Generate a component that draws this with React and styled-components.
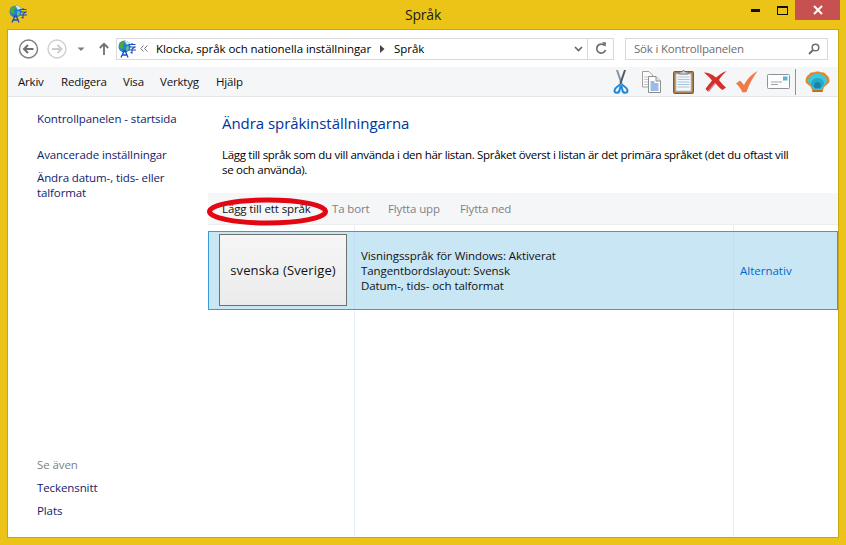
import React from "react";
import styled, { createGlobalStyle } from "styled-components";

const Global = createGlobalStyle`
  html, body { margin: 0; padding: 0; background: #ecc417; }
  body { font-family: "Open Sans", "Noto Sans", "Liberation Sans", sans-serif; font-size: 11.5px; color: #000; }
  * { box-sizing: border-box; }
`;

const Frame = styled.div`
  width: 846px; height: 545px; background: #ecc417; display: flex; flex-direction: column; overflow: hidden;
`;
const TitleBar = styled.div`
  height: 29px; flex: none; position: relative; display: flex; align-items: flex-start; justify-content: center;
`;
const TitleIcon = styled.div`
  position: absolute; left: 9px; top: 5px; width: 18px; height: 18px;
`;
const Title = styled.div`
  font-size: 14px; line-height: 29px; color: #1a1a1a; letter-spacing: -0.2px;
`;
const WindowButtons = styled.div`
  position: absolute; right: 6px; top: 0; display: flex; align-items: flex-start;
`;
const WinBtn = styled.div`
  width: ${p => p.$w}px; height: 20px; display: flex; align-items: center; justify-content: center;
  background: ${p => p.$close ? "#c75050" : "transparent"};
`;
const Client = styled.div`
  flex: 1; margin: 0 7px 7px 7px; border: 1px solid #c9a516; background: #fff; display: flex; flex-direction: column; min-height: 0;
`;
const NavBar = styled.div`
  height: 37px; flex: none; display: flex; align-items: center; padding: 0 10px 0 10px; background: #fff;
`;
const NavIcons = styled.div`
  width: 98px; flex: none; height: 24px;
`;
const BoxBase = styled.div`
  height: 22px; border: 1px solid #d9d9d9; background: #fff; display: flex; align-items: center;
`;
const Address = styled(BoxBase)`
  width: 498px; flex: none; padding-left: 1px;
`;
const Crumbs = styled.div`
  flex: 1; display: flex; align-items: center; min-width: 0; white-space: nowrap; letter-spacing: -0.07px;
`;
const CrumbChevrons = styled.span`
  display: inline-flex; width: 16px; margin-left: 4px;
`;
const Sep = styled.span`
  display: inline-flex; width: 23px; justify-content: center;
`;
const Drop = styled.div`
  width: 25px; height: 20px; display: flex; align-items: center; justify-content: center; border-right: 1px solid #d9d9d9;
  padding-left: 6px;
`;
const Refresh = styled.div`
  width: 25px; height: 20px; display: flex; align-items: center; justify-content: center;
`;
const Search = styled(BoxBase)`
  width: 203px; flex: none; margin-left: 11px; padding: 0 7px 0 8px; justify-content: space-between; color: #6d6d6d; letter-spacing: -0.2px;
`;
const MenuBar = styled.div`
  height: 30px; flex: none; background: #f5f6f7; border-bottom: 1px solid #e6e6e6; display: flex; align-items: center; padding-left: 10px; position: relative;
`;
const MenuItem = styled.div`
  width: ${p => p.$w}px; letter-spacing: -0.2px; color: #111;
`;
const Tools = styled.div`
  position: absolute; left: 597px; top: 0; height: 29px; display: flex; align-items: center;
`;
const Tool = styled.div`
  width: ${p => p.$w}px; display: flex; justify-content: center; align-items: center;
`;
const ToolSep = styled.div`
  width: 1px; height: 26px; background: #8f9499; margin: 0 9px 0 1px;
`;
const Body = styled.div`
  flex: 1; display: flex; min-height: 0;
`;
const Sidebar = styled.nav`
  width: 200px; flex: none; padding: 14px 0 0 29px; display: flex; flex-direction: column; letter-spacing: -0.1px;
`;
const SideLink = styled.div`
  color: #12226e; line-height: 15px; margin-bottom: ${p => p.$mb || 0}px;
`;
const SideBottom = styled.div`
  margin-top: auto; padding-bottom: 19px; display: flex; flex-direction: column; gap: 8px;
`;
const SideMuted = styled.div`
  color: #7f7f7f; line-height: 15px;
`;
const Content = styled.main`
  flex: 1; min-width: 0; display: flex; flex-direction: column; position: relative;
`;
const Intro = styled.div`
  padding: 16px 0 0 14px; height: 96px; flex: none;
`;
const Heading = styled.h1`
  margin: 0 0 14px; font-weight: 400; font-size: 15px; line-height: 20px; color: #003399; letter-spacing: -0.05px;
`;
const Lead = styled.p`
  margin: 0; line-height: 15px; letter-spacing: -0.3px; white-space: nowrap;
`;
const ActionBar = styled.div`
  height: 32px; flex: none; background: #f5f6f7; border-bottom: 1px solid #eceded; display: flex; align-items: center; padding: 0 0 0 14px;
`;
const Action = styled.div`
  color: ${p => p.$on ? "#111" : "#7f7f88"}; width: ${p => p.$w}px; letter-spacing: ${p => p.$on ? "-0.12px" : "-0.15px"}; white-space: nowrap;
`;
const Oval = styled.svg`
  position: absolute; left: -1px; top: 99px; width: 124px; height: 32px; overflow: visible;
`;
const Gap = styled.div`
  height: 6px; flex: none; display: grid; grid-template-columns: 147px 379px 1fr;
`;
const Row = styled.div`
  height: 79px; flex: none; display: grid; grid-template-columns: 146px 379px 1fr; background: #c9e6f5; border: 1px solid #3a9bd9;
`;
const Cell = styled.div`
  border-right: ${p => p.$last ? "none" : "1px solid #bfdef2"}; display: flex; align-items: center;
`;
const LangBtn = styled.div`
  width: 128px; height: 72px; margin: -1px 0 0 10px; border: 1px solid #707070; background: linear-gradient(#f6f6f6, #ebebeb);
  display: flex; align-items: center; justify-content: center; font-size: 13px; letter-spacing: 0.15px; color: #111;
`;
const Info = styled.div`
  padding-left: 6px; line-height: 15px; letter-spacing: -0.08px; color: #111; white-space: nowrap;
`;
const Link = styled.div`
  padding-left: 6px; color: #0066cc; letter-spacing: 0;
`;
const Filler = styled.div`
  flex: 1; display: grid; grid-template-columns: 147px 379px 1fr;
`;
const Col = styled.div`
  border-right: ${p => p.$last ? "none" : "1px solid #e6eefa"};
`;

const LangIcon = ({ size = 18 }) => (
  <svg width={size} height={size} viewBox="0 0 18 18">
    <circle cx="6.500" cy="6.500" r="6" fill="#1f7fdc" />
    <path d="M6 .8 C9 .5 11.500 2 12 4.500 L8.500 4.500 L7.500 2.500Z" fill="#cfeefc" />
    <path d="M1.500 3.500 C3 1.500 5 .8 6.500 1 L7 3.500 L5 4.500 L5.500 7.500 L4 9.500 L1 7Z" fill="#4fa83a" />
    <path d="M8 6.500 L11 6.500 L10.500 10 L8.500 11Z" fill="#7cc55c" />
    <path d="M10.500 4.500h7M14 3v1.500M11.500 7h5.500L14 9v4l-1.500-.5M10.500 10h7.500" stroke="#1c4bc8" strokeWidth="1.100" fill="none" />
    <path d="M3 17.500 L6 11 L7.300 11 L10 17.500 M4.300 15 H8.800" stroke="#1c4bc8" strokeWidth="1.300" fill="none" />
  </svg>
);

const NavSvg = () => (
  <svg width="98" height="24" viewBox="0 0 98 24">
    <circle cx="10.500" cy="12" r="9" fill="#fff" stroke="#7d7d7d" strokeWidth="1.400" />
    <path d="M15.500 12H6.500M10 8l-4 4 4 4" fill="none" stroke="#6f6f6f" strokeWidth="2" />
    <circle cx="39" cy="12" r="9" fill="#fff" stroke="#cfcfcf" strokeWidth="1.400" />
    <path d="M34 12h9M39.500 8l4 4-4 4" fill="none" stroke="#cdcdcd" strokeWidth="2" />
    <path d="M59.500 10.500h7l-3.500 3.500z" fill="#7c7c7c" />
    <path d="M86 18V7M81.800 11L86 6.800 90.200 11" fill="none" stroke="#707070" strokeWidth="1.800" />
  </svg>
);

const Scissors = () => (
  <svg width="16" height="24" viewBox="0 0 16 24">
    <path d="M3 0 L5 0 L9.500 13 L8 15 Z" fill="#8793a0" />
    <path d="M13 0 L11 0 L6.500 13 L8 15 Z" fill="#4f5a66" />
    <path d="M7 14 C6 16.500 1.500 17 1.500 20.500 C1.500 23.500 6 23.500 6.500 20.500 C6.800 18.500 7 17 8 15.500" fill="none" stroke="#1f87d8" strokeWidth="2" />
    <path d="M9 14 C10 16.500 14.500 17 14.500 20.500 C14.500 23.500 10 23.500 9.500 20.500 C9.200 18.500 9 17 8 15.500" fill="none" stroke="#1f87d8" strokeWidth="2" />
  </svg>
);
const CopyIcon = () => (
  <svg width="19" height="22" viewBox="0 0 19 22">
    <path d="M.5.5h6.500l3.500 3.500v12h-10z" fill="#fbfbfb" stroke="#a0a0a0" />
    <path d="M2 6h6M2 8.500h4M2 11h4M2 13.500h4" stroke="#c8c8c8" />
    <path d="M6.500 5.500h7.500l4.500 4.500v11.500h-12z" fill="#fff" stroke="#8d8d8d" />
    <path d="M14 5.500v4.500h4.500" fill="#e6e6e6" stroke="#8d8d8d" />
    <path d="M8.500 11h4M8.500 13h8M8.500 15h8M8.500 17h8M8.500 19h8" stroke="#3b79c9" />
  </svg>
);
const ClipIcon = () => (
  <svg width="21" height="25" viewBox="0 0 21 25">
    <rect x=".5" y="2.500" width="20" height="22" rx="1" fill="#a57d50" stroke="#7e5a33" />
    <rect x="3" y="5" width="15" height="17" fill="#f5f8fb" stroke="#c9c9c9" />
    <path d="M4.500 8h12M4.500 10.500h12M4.500 13h12M4.500 15.500h12M4.500 18h12" stroke="#a9c4de" />
    <path d="M6 5V3h3l1.500-2 1.500 2h3v2z" fill="#d9d9d9" stroke="#666" strokeWidth=".8" />
  </svg>
);
const XIcon = () => (
  <svg width="23" height="21" viewBox="0 0 23 21">
    <path d="M0 1.500 C4 1.500 8 3 12 6.500 C15 4 18 1.500 22.500 0 C19.500 3 17 5.500 15 9 C17.500 12 19.500 14.500 22 16.500 L18.500 19 C15.500 17 13.500 14.500 11 12 C8.500 14.500 6 17.500 4 20.500 L1.500 18 C3.500 15 6 12 8 9.500 C5.500 6.500 3 4 0 1.500Z" fill="#d42f2a" />
    <path d="M4 20.500 C6 17.500 8.500 14.500 11 12 L11.800 12.800 C9.500 15.500 7 18 5 20.800Z" fill="#b98a86" />
  </svg>
);
const CheckIcon = () => (
  <svg width="22" height="22" viewBox="0 0 22 22">
    <path d="M0 12.500 L4 9.500 L8 14 C11 8.500 15 3.500 21.500 0 C17.500 6 13 13 10.500 21 L6.500 21.500 C5 18 2.500 14.500 0 12.500Z" fill="#ee7b4a" />
  </svg>
);
const MailIcon = () => (
  <svg width="23" height="15" viewBox="0 0 23 15">
    <rect x=".5" y=".5" width="22" height="14" rx="1" fill="#fdfdfd" stroke="#8d9399" />
    <rect x="16" y="2.500" width="4.500" height="4" fill="#5cb3d6" />
    <path d="M4 8h11M4 10.500h7" stroke="#a0a4a8" />
  </svg>
);
const ShellIcon = () => (
  <svg width="25" height="22" viewBox="0 0 25 22">
    <path d="M12.500 .5 C14 .5 15 .8 16 1.500 C18 1 20 2 21 3.500 C23 4.500 24.500 7 24.500 10 C24.500 11.500 23.500 12.500 22 13.500 L19 16 L17.500 21 H7.500 L6 16 L3 13.500 C1.500 12.500 .5 11.500 .5 10 C.5 7 2 4.500 4 3.500 C5 2 7 1 9 1.500 C10 .8 11 .5 12.500 .5Z" fill="#e8832a" />
    <path d="M12.500 2.500 C17.500 2.500 22 6.500 22.500 10.500 L18 15 L17 19 H8 L7 15 L2.500 10.500 C3 6.500 7.500 2.500 12.500 2.500Z" fill="#3cc9dc" />
    <path d="M6 13 C6 9.500 9 7 12.500 7 S19 9.500 19 13 L17 16 H8Z" fill="#24a9c8" />
    <path d="M9 15 C9 12.500 10.500 11 12.500 11 S16 12.500 16 15 L15.500 17.500 H9.500Z" fill="#1783a8" />
    <path d="M8 19 H17 L17.500 21 H7.500Z" fill="#c76a1e" />
  </svg>
);

export default function App() {
  return (
    <Frame>
      <Global />
      <TitleBar>
        <TitleIcon><LangIcon size={18} /></TitleIcon>
        <Title>Språk</Title>
        <WindowButtons>
          <WinBtn $w={27}><svg width="9" height="3"><rect width="9" height="3" y="0" fill="#111" /></svg></WinBtn>
          <WinBtn $w={26}><svg width="11" height="9"><rect x=".5" y=".5" width="10" height="8" fill="none" stroke="#111" /><rect width="11" height="2" fill="#111" /></svg></WinBtn>
          <WinBtn $w={45} $close><svg width="10" height="10"><path d="M1 1l8 8M9 1l-8 8" stroke="#fff" strokeWidth="2" /></svg></WinBtn>
        </WindowButtons>
      </TitleBar>
      <Client>
        <NavBar>
          <NavIcons><NavSvg /></NavIcons>
          <Address>
            <LangIcon size={18} />
            <Crumbs>
              <CrumbChevrons><svg width="8" height="7" viewBox="0 0 8 7"><path d="M3.500.5L.8 3.500l2.700 3M7.300.5L4.600 3.500l2.700 3" fill="none" stroke="#777" /></svg></CrumbChevrons>
              Klocka, språk och nationella inställningar
              <Sep><svg width="5" height="8"><path d="M0 0l4.500 4L0 8z" fill="#444" /></svg></Sep>
              Språk
            </Crumbs>
            <Drop><svg width="9" height="6"><path d="M1 1l3.500 3.500L8 1" fill="none" stroke="#666" strokeWidth="1.600" /></svg></Drop>
            <Refresh><svg width="12" height="13" viewBox="0 0 12 13"><path d="M9.500 3.500A4.500 4.500 0 1 0 10.500 8" fill="none" stroke="#6f6f6f" strokeWidth="1.700" /><path d="M7 0l4 .5-.5 4.500z" fill="#6f6f6f" /></svg></Refresh>
          </Address>
          <Search>
            Sök i Kontrollpanelen
            <svg width="12" height="12" viewBox="0 0 12 12"><circle cx="7.500" cy="4.500" r="3.300" fill="none" stroke="#6f6f6f" strokeWidth="1.500" /><path d="M5 7l-4 4" stroke="#6f6f6f" strokeWidth="2" /></svg>
          </Search>
        </NavBar>
        <MenuBar>
          <MenuItem $w={43}>Arkiv</MenuItem>
          <MenuItem $w={62}>Redigera</MenuItem>
          <MenuItem $w={37}>Visa</MenuItem>
          <MenuItem $w={56}>Verktyg</MenuItem>
          <MenuItem $w={40}>Hjälp</MenuItem>
          <Tools>
            <Tool $w={31}><Scissors /></Tool>
            <Tool $w={31}><CopyIcon /></Tool>
            <Tool $w={32}><ClipIcon /></Tool>
            <Tool $w={32}><XIcon /></Tool>
            <Tool $w={31}><CheckIcon /></Tool>
            <Tool $w={32}><MailIcon /></Tool>
            <ToolSep />
            <Tool $w={25}><ShellIcon /></Tool>
          </Tools>
        </MenuBar>
        <Body>
          <Sidebar>
            <SideLink $mb={21}>Kontrollpanelen - startsida</SideLink>
            <SideLink $mb={8}>Avancerade inställningar</SideLink>
            <SideLink>Ändra datum-, tids- eller</SideLink>
            <SideLink>talformat</SideLink>
            <SideBottom>
              <SideMuted>Se även</SideMuted>
              <SideLink>Teckensnitt</SideLink>
              <SideLink>Plats</SideLink>
            </SideBottom>
          </Sidebar>
          <Content>
            <Intro>
              <Heading>Ändra språkinställningarna</Heading>
              <Lead>Lägg till språk som du vill använda i den här listan. Språket överst i listan är det primära språket (det du oftast vill<br />se och använda).</Lead>
            </Intro>
            <ActionBar>
              <Action $on $w={110}>Lägg till ett språk</Action>
              <Action $w={56}>Ta bort</Action>
              <Action $w={72}>Flytta upp</Action>
              <Action>Flytta ned</Action>
            </ActionBar>
            <Oval viewBox="0 0 124 32">
              <ellipse cx="60.500" cy="15.500" rx="58" ry="11.500" fill="none" stroke="#e30613" strokeWidth="5" />
            </Oval>
            <Gap><Col /><Col /><Col $last /></Gap>
            <Row>
              <Cell><LangBtn>svenska (Sverige)</LangBtn></Cell>
              <Cell>
                <Info>Visningsspråk för Windows: Aktiverat<br />Tangentbordslayout: Svensk<br />Datum-, tids- och talformat</Info>
              </Cell>
              <Cell $last><Link>Alternativ</Link></Cell>
            </Row>
            <Filler><Col /><Col /><Col $last /></Filler>
          </Content>
        </Body>
      </Client>
    </Frame>
  );
}
